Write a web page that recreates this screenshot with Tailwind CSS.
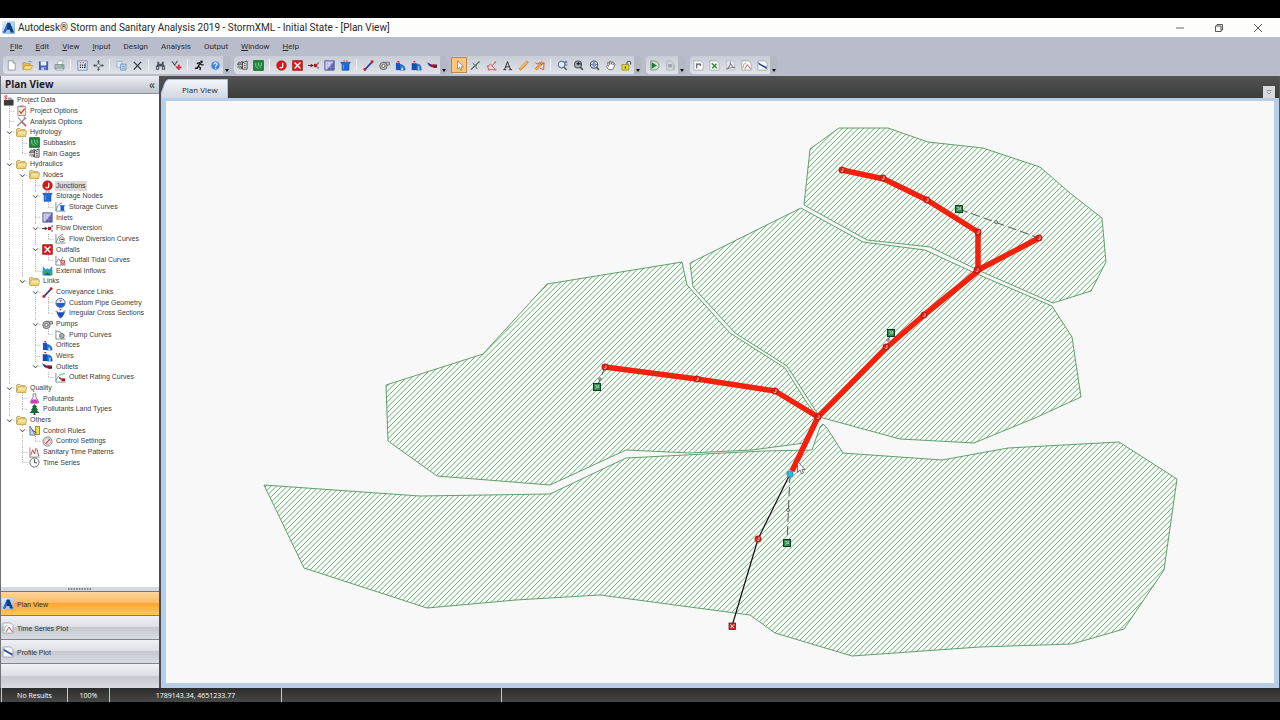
<!DOCTYPE html>
<html lang="en">
<head>
<meta charset="utf-8">
<title>Autodesk Storm and Sanitary Analysis 2019</title>
<script src="https://cdn.jsdelivr.net/npm/@tailwindcss/browser@4"></script>
</head>
<body class="bg-black">

<svg class="absolute size-0" aria-hidden="true">
  <defs>
    <linearGradient id="gBlue" x1="0" y1="0" x2="1" y2="1"><stop offset="0" stop-color="#e8f3fd"/><stop offset="1" stop-color="#7fb0e0"/></linearGradient>
    <linearGradient id="gFold" x1="0" y1="0" x2="0" y2="1"><stop offset="0" stop-color="#fdf4b8"/><stop offset="1" stop-color="#efc958"/></linearGradient>
  </defs>
  <symbol id="i-app" viewBox="0 0 12 12"><rect width="12" height="12" rx="1" fill="url(#gBlue)"/><path d="M1 10.500L5 1.500h2.500L11 10.500H8L7.300 8H4.500L3.200 10.500z" fill="#103a80"/><path d="M1 10.500L5 1.500l-.3 6L3 10.500z" fill="#2f6fc0"/></symbol>
  <symbol id="i-new" viewBox="0 0 12 12"><path d="M2.500 1h5l2.500 2.500V11H2.500z" fill="#fff" stroke="#7d8796" stroke-width=".8"/><path d="M7.500 1v2.500H10" fill="#cdd6e2" stroke="#7d8796" stroke-width=".6"/></symbol>
  <symbol id="i-open" viewBox="0 0 12 12"><path d="M1 10V3h3l1 1h4v2" fill="#e9c04b" stroke="#a87b1d" stroke-width=".6"/><path d="M1 10.500L3 6h8.500L9.500 10.500z" fill="#fbdc74" stroke="#a87b1d" stroke-width=".6"/><path d="M6.500 2.500C8 1 9.500 1 10.500 2.500" fill="none" stroke="#5a86c0" stroke-width=".9"/></symbol>
  <symbol id="i-save" viewBox="0 0 12 12"><path d="M1 1.500h10v9.500H1z" fill="#3f62b8"/><path d="M3 1.500h6v4.500H3z" fill="#e8eefa"/><path d="M3.500 8h5v3h-5z" fill="#b9c6e6"/><path d="M7 8.500h1V11H7z" fill="#27408c"/></symbol>
  <symbol id="i-print" viewBox="0 0 12 12"><path d="M3.500 5L5 1h5L8.500 5z" fill="#fff" stroke="#7c8a90" stroke-width=".6"/><path d="M1 5h10v4.500H1z" fill="#a9b7b8" stroke="#66757a" stroke-width=".6"/><path d="M2 9h8v2H2z" fill="#e4ebe6" stroke="#66757a" stroke-width=".5"/><path d="M8 6.500h2" stroke="#2fa04a"/></symbol>
  <symbol id="i-grid" viewBox="0 0 12 12"><rect x="1" y="1" width="10" height="10" fill="#e9f0f8" stroke="#58779c" stroke-width=".8"/><path d="M3 3h1.500M6 3h1.500" stroke="#c33" stroke-width="1.300"/><path d="M3 5.500h6M3 8h6" stroke="#222" stroke-width="1.400" stroke-dasharray="1.400 .9"/><path d="M9 3v6" stroke="#356db5" stroke-width="1"/></symbol>
  <symbol id="i-move" viewBox="0 0 12 12"><path d="M6 0.500v11M.5 6h11" stroke="#555d6b" stroke-width="1"/><path d="M6 0l1.800 2.500H4.200zM6 12l1.800-2.500H4.200zM0 6l2.500-1.800v3.600zM12 6L9.500 4.200v3.600z" fill="#555d6b"/><circle cx="6" cy="6" r="2" fill="#e6e8ec" stroke="#555d6b" stroke-width=".8"/></symbol>
  <symbol id="i-copy" viewBox="0 0 12 12"><path d="M1 1.500h5.500V8H1z" fill="#dfe9f7" stroke="#87a0c4" stroke-width=".7"/><path d="M5 4.500h6V11H5z" fill="#c3d6f0" stroke="#5e80b4" stroke-width=".7"/><path d="M6.500 7h3M6.500 9h3" stroke="#5e80b4" stroke-width=".7"/></symbol>
  <symbol id="i-del" viewBox="0 0 12 12"><path d="M2 2l8 8.500M10 2L2 10.500" stroke="#30343c" stroke-width="1.300" fill="none"/></symbol>
  <symbol id="i-find" viewBox="0 0 12 12"><path d="M2.500 2h2v2h3V2h2v3l1.500 2v3.500H7.500V7h-3v3.500H1V7l1.500-2z" fill="#4a4f5c"/><path d="M2 7.500h1.500v2H2zM8.500 7.500H10v2H8.500z" fill="#c9ced8"/></symbol>
  <symbol id="i-check" viewBox="0 0 12 12"><path d="M1 1.500l3 4L7 1" fill="none" stroke="#555" stroke-width="1.200"/><path d="M4 5.500L8 10" stroke="#777" stroke-width="1"/><path d="M8.500 5v6M5.500 8h6" stroke="#d5303a" stroke-width="1.900"/></symbol>
  <symbol id="i-run" viewBox="0 0 12 12"><circle cx="8.200" cy="2" r="1.400" fill="#111"/><path d="M3 4l3-1 2 2 2.500.3M6.500 4L4.500 7l2.500 1.500L6.500 11M4.500 7L3.500 9H1" fill="none" stroke="#111" stroke-width="1.400"/></symbol>
  <symbol id="i-help" viewBox="0 0 12 12"><circle cx="6" cy="6" r="5" fill="#3f82d8" stroke="#bcd4f2" stroke-width="1"/><path d="M4.300 4.800c0-2.300 3.500-2.200 3.500-.2C7.800 6 6 5.800 6 7.300" fill="none" stroke="#fff" stroke-width="1.200"/><circle cx="6" cy="9" r=".8" fill="#fff"/></symbol>
  <symbol id="i-rain" viewBox="0 0 12 12"><path d="M.5 5.500C1 2 3 2 4 2.500 5 1 7 1.500 7.500 3L6 5z" fill="#8f9094" stroke="#333" stroke-width=".6"/><path d="M6 3l5-2v9H6z" fill="#e3e3e3" stroke="#222" stroke-width=".8"/><path d="M7.500 4h2M7.500 6h2M7.500 8h2" stroke="#222" stroke-width=".7"/><path d="M1.500 6.500l-.5 2M3.500 6.500l-.5 3M5 7l-.5 3" stroke="#333" stroke-width=".9"/></symbol>
  <symbol id="i-sub" viewBox="0 0 12 12"><rect x=".8" y=".8" width="10.400" height="10.400" fill="#1f8a3f" stroke="#0e4d20" stroke-width=".9"/><path d="M3 3v4l3 2.500M6 3v3l3 2.500M9 3v3.500" stroke="#a4e0b0" stroke-width=".8" fill="none"/></symbol>
  <symbol id="i-junc" viewBox="0 0 12 12"><circle cx="6" cy="6" r="5.300" fill="#e01414" stroke="#9c0c0c" stroke-width=".5"/><path d="M7.300 3v4.200c0 2-2.800 1.900-3 .3" fill="none" stroke="#fff" stroke-width="1.400"/></symbol>
  <symbol id="i-outfall" viewBox="0 0 12 12"><rect x=".8" y=".8" width="10.400" height="10.400" fill="#e01a1a" stroke="#8e1010" stroke-width=".8"/><path d="M2.800 2.800l6.400 6.400M9.200 2.800L2.800 9.200" stroke="#fff" stroke-width="1.500"/></symbol>
  <symbol id="i-flow" viewBox="0 0 12 12"><path d="M0 6h5" stroke="#444" stroke-width="1.200"/><path d="M3 4L6.500 6 3 8z" fill="#6b1a22"/><path d="M6.500 4.200h3.600v3.600H6.500z" fill="#b01d2a"/><path d="M11 2.500v2M11 7.500v2" stroke="#555" stroke-width="1.200"/></symbol>
  <symbol id="i-inlet" viewBox="0 0 12 12"><rect x="1" y="1" width="10" height="10" fill="#d6d6ee" stroke="#36367e" stroke-width=".9"/><path d="M11 1v10H3z" fill="#5a5aae"/><path d="M4 1v10M7.500 1v10M1 4.500h10M1 8h10" stroke="#9b9bce" stroke-width=".5"/></symbol>
  <symbol id="i-stor" viewBox="0 0 12 12"><path d="M.8 2.500H11.200L9.800 5v6.200H2.200V5z" fill="#1d6bd8" stroke="#0c3f8c" stroke-width=".6"/><path d="M4 1h1M7 1h1" stroke="#d22" stroke-width="1.300"/><path d="M3.500 5v5" stroke="#6fa9f2" stroke-width="1"/></symbol>
  <symbol id="i-link" viewBox="0 0 12 12"><path d="M2 10.500L10 2" stroke="#33468f" stroke-width="2"/><circle cx="2" cy="10.300" r="1.600" fill="#c4222a"/><circle cx="10" cy="2" r="1.600" fill="#c4222a"/></symbol>
  <symbol id="i-pump" viewBox="0 0 12 12"><path d="M4.500 2.500H11.500v3H9" fill="#b9b9b9" stroke="#555" stroke-width=".7"/><circle cx="4.800" cy="6.500" r="4" fill="#c2c2c2" stroke="#555" stroke-width=".9"/><circle cx="4.800" cy="6.500" r="1.800" fill="#eee" stroke="#555" stroke-width=".9"/></symbol>
  <symbol id="i-orif" viewBox="0 0 12 12"><path d="M1 3h4.500v8H1z" fill="#1559c4"/><path d="M5.500 5c3 0 5.500 2 5.500 6H5.500z" fill="#2b86e4" stroke="#0d3f8c" stroke-width=".6"/><path d="M7 8.500c1.200-.4 2 .8 2 2.500H7z" fill="#e6f1fc"/><path d="M2 1h3L3.500 3z" fill="#d22"/></symbol>
  <symbol id="i-weir" viewBox="0 0 12 12"><path d="M.8 3.500H6V11H.8z" fill="#0f4fae"/><path d="M6 4.500h2c2 .5 3 2.500 3.200 6.500H6z" fill="#1f74d8" stroke="#0d3f8c" stroke-width=".6"/><path d="M7.500 7h1.800v4H7.500z" fill="#9ccaf6"/><path d="M2 1.200h3L3.500 3z" fill="#d22"/></symbol>
  <symbol id="i-outlet" viewBox="0 0 12 12"><path d="M0 2.500l4.500 2v3L2 6z" fill="#1c3f9e"/><path d="M3.500 4.500L8 5v3.500L4.500 7.500z" fill="#c8141e"/><path d="M7 5h4v3.500H7z" fill="#7c1018"/><path d="M8 5.500h3" stroke="#3a5fc0" stroke-width=".8"/></symbol>
  <symbol id="i-sel" viewBox="0 0 12 12"><path d="M4 .8v9l2-1.800 1.400 3.200 1.400-.6L7.500 7.500h2.800z" fill="#fff" stroke="#7a6a58" stroke-width=".8"/></symbol>
  <symbol id="i-vtx" viewBox="0 0 12 12"><path d="M1 10.500L10.500 1.500" stroke="#4b5160" stroke-width="1.300"/><path d="M3 3l5 7" stroke="#7d8a80" stroke-width="1.200"/><path d="M5 4.500h2.500V7H5z" fill="#5b8a68"/></symbol>
  <symbol id="i-poly" viewBox="0 0 12 12"><path d="M1.500 7L5 4.500l1.500 2L10 2.500M1.500 7L3 10.500h7.500L6.500 6.500" fill="none" stroke="#d84a52" stroke-width=".9"/><path d="M1 6h2v2H1zM9 1.500h2v2H9zM9.500 9.500h2v2h-2zM2 9.500h2v2H2z" fill="#e0686e"/></symbol>
  <symbol id="i-text" viewBox="0 0 12 12"><path d="M1.500 10.500h3M7.500 10.500h3.500M2.800 10.500L6 1.800l3.400 8.700M4 7.500h4.200" fill="none" stroke="#222" stroke-width="1"/></symbol>
  <symbol id="i-rule" viewBox="0 0 12 12"><path d="M1 9.500L9.500 1l1.800 1.700L3 11.300z" fill="#f2a33a" stroke="#bb6f17" stroke-width=".6"/><path d="M2.500 9L9.500 2" stroke="#ffe0a0" stroke-width=".7"/></symbol>
  <symbol id="i-area" viewBox="0 0 12 12"><path d="M1 9.500L8.500 1.500l1.700 1.700L3 11z" fill="#f0a038" stroke="#bb6f17" stroke-width=".5"/><path d="M1.500 3l3 1.500L6 2.500l2 2.500 3-2-.5 7.500-4-1.500" fill="none" stroke="#d2532c" stroke-width="1"/></symbol>
  <symbol id="i-zoomw" viewBox="0 0 12 12"><circle cx="5" cy="5" r="3.600" fill="#dce8f6" stroke="#5d6470" stroke-width="1.100"/><path d="M7.500 7.500l3 3.300" stroke="#5d6470" stroke-width="1.700"/><path d="M9.800.8v3M8.300 2.300h3M8.500 5.500h3" stroke="#3a58a8" stroke-width=".9"/></symbol>
  <symbol id="i-zoomp" viewBox="0 0 12 12"><circle cx="5.500" cy="5" r="3.800" fill="#a8adb5" stroke="#4c525c" stroke-width="1.100"/><path d="M8 7.800l2.800 3" stroke="#4c525c" stroke-width="1.700"/><path d="M3.500 4l3-2v1.300c2 0 3 1 3 2.500-1-1-2-1.200-3-1V6z" fill="#222"/></symbol>
  <symbol id="i-zoome" viewBox="0 0 12 12"><circle cx="5.500" cy="5" r="4" fill="#dce8f6" stroke="#4c525c" stroke-width="1.100"/><path d="M8 7.800l2.800 3" stroke="#4c525c" stroke-width="1.700"/><path d="M5.500 2v6M2.500 5h6" stroke="#2c4f9c" stroke-width="1.100"/><path d="M3.500 3.500h4v3h-4z" fill="#7f97c2"/></symbol>
  <symbol id="i-pan" viewBox="0 0 12 12"><path d="M4 10.500L1.500 7l1-.8L4 7 2.500 3l1.200-.6L5 5V1.500l1.300-.2.5 3.500L8 1.800l1.200.5-.4 3L10 4l1 .6L9.500 8.500 8.500 10.500z" fill="#fff" stroke="#444" stroke-width=".7"/></symbol>
  <symbol id="i-lock" viewBox="0 0 12 12"><path d="M6.500 5V3c0-2.200 4-2.200 4 0v2" fill="none" stroke="#555" stroke-width="1.300"/><path d="M1 5h7.500v6H1z" fill="#e8dc22" stroke="#77701a" stroke-width=".7"/><path d="M4.800 7v2.200" stroke="#333" stroke-width="1.300"/></symbol>
  <symbol id="i-play" viewBox="0 0 12 12"><path d="M2 1h3c8 0 8 10 0 10H2z" fill="#cfe0cf" stroke="#5a6a5a" stroke-width=".7"/><path d="M3 2.500L8.500 6 3 9.500z" fill="#1f7a38"/></symbol>
  <symbol id="i-stop" viewBox="0 0 12 12"><path d="M2 1h4l3 2v8H2z" fill="#d4d7dc" stroke="#a2a6ae" stroke-width=".7"/><path d="M3.500 4.500h4V8h-4z" fill="#9a9fa8"/><path d="M10 5v6" stroke="#a2a6ae"/></symbol>
  <symbol id="i-rep" viewBox="0 0 12 12"><path d="M1 1h7.500L11 3.500V11H1z" fill="#f6f6f8" stroke="#9a9ea6" stroke-width=".7"/><path d="M4 9V4.500h4v2" fill="none" stroke="#555b66" stroke-width="1.200"/></symbol>
  <symbol id="i-xls" viewBox="0 0 12 12"><path d="M1 1h7.500L11 3.500V11H1z" fill="#f6f8f6" stroke="#9a9ea6" stroke-width=".7"/><path d="M3 3.500l5.500 5.500M8 4L3.500 9" stroke="#2d8a3b" stroke-width="1.500"/></symbol>
  <symbol id="i-pdf" viewBox="0 0 12 12"><path d="M2 1h6l2.500 2.500V11H2z" fill="#eeeff2" stroke="#a8abb2" stroke-width=".6"/><path d="M1.500 10C5 8 6.500 4 5.500 2c1 4 3 6 5.500 6.500-3-.5-6.500 0-9.500 1.500z" fill="none" stroke="#7e828c" stroke-width="1.100"/></symbol>
  <symbol id="i-tplot" viewBox="0 0 12 12"><path d="M1 1h7.500L11 3.500V11H1z" fill="#fafafa" stroke="#8e9299" stroke-width=".7"/><path d="M2 9c1-5 2-6 3.500-5" fill="none" stroke="#5aa86a" stroke-width=".8"/><path d="M4 10l3-5 3.500 5" fill="none" stroke="#d0404c" stroke-width=".9"/></symbol>
  <symbol id="i-pplot" viewBox="0 0 12 12"><path d="M1 1h7.500L11 3.500V11H1z" fill="#fafafa" stroke="#8e9299" stroke-width=".7"/><path d="M2 4l8 4.500" stroke="#23469c" stroke-width="1.700"/><path d="M2 2.500v2M10 7v3" stroke="#23469c" stroke-width=".8"/></symbol>
  <symbol id="i-proj" viewBox="0 0 12 12"><path d="M1 5h10.500v6.500H1z" fill="#3a3a3e"/><path d="M4 5V3.500h5V5" fill="none" stroke="#555" stroke-width=".9"/><path d="M.5 0h5v5.500h-5z" fill="#f9dede"/><path d="M4.500 1.200C2 .5 1.200 2.500 3 2.800s1.500 2.200-1.300 1.500" fill="none" stroke="#cf1f2c" stroke-width="1"/></symbol>
  <symbol id="i-popt" viewBox="0 0 12 12"><path d="M2 1.500h8.500v10H2z" fill="#fbeee6" stroke="#9c6b54" stroke-width=".8"/><path d="M4 .5h4v2H4z" fill="#8d8d92"/><path d="M3.500 6.500L5.500 9l4-5" fill="none" stroke="#d5382c" stroke-width="1.300"/></symbol>
  <symbol id="i-aopt" viewBox="0 0 12 12"><path d="M1.500 11L10 2.500" stroke="#8a8f98" stroke-width="1.600"/><path d="M8.500.8L11.200 3.500" stroke="#8a8f98" stroke-width="1.200"/><path d="M2.500 1.500L6 6" stroke="#9aa0a8" stroke-width="1.300"/><path d="M6 6l5 5" stroke="#c45a5a" stroke-width="1.800"/></symbol>
  <symbol id="i-fold" viewBox="0 0 12 12"><path d="M.6 9.500V2.300l.6-.8h3l1 1.200h4.500V5" fill="#f3d67a" stroke="#a08038" stroke-width=".6"/><path d="M2.300 4.300h9.200L10.500 10.500H1.200L.6 9.500z" fill="url(#gFold)" stroke="#a08038" stroke-width=".6"/></symbol>
  <symbol id="i-scurve" viewBox="0 0 12 12"><path d="M1 1v10h10.500" fill="none" stroke="#667" stroke-width=".8"/><path d="M1.500 10C2.500 5 4 3 8 2" fill="none" stroke="#4f7fa8" stroke-width=".9"/><path d="M5 4.500h6L10 6v4.500H6V6z" fill="#1d5fc0"/></symbol>
  <symbol id="i-fcurve" viewBox="0 0 12 12"><path d="M1 1v10h10.500" fill="none" stroke="#667" stroke-width=".8"/><path d="M1.500 10C3 5 4 3 9 1.500" fill="none" stroke="#3d8a66" stroke-width=".9"/><circle cx="7.500" cy="7" r="2.800" fill="#fff" stroke="#555" stroke-width=".7"/><path d="M6 7h3.500" stroke="#b5202a" stroke-width="1.400"/></symbol>
  <symbol id="i-tcurve" viewBox="0 0 12 12"><path d="M1 1v10h10.500" fill="none" stroke="#667" stroke-width=".8"/><path d="M1.500 8l2.500-4 2 3 2.500-5" fill="none" stroke="#6b6fa0" stroke-width=".9"/><rect x="6" y="5.500" width="5" height="5" fill="#c9524c"/><path d="M7 6.500l3 3M10 6.500l-3 3" stroke="#fff" stroke-width=".8"/></symbol>
  <symbol id="i-ext" viewBox="0 0 12 12"><path d="M.8 1v10.200h10.400V1L8 5 6 3.500 4 5z" fill="#2a9ad0"/><path d="M.8 6L4 7l2-1.500L8 7.500l3.200-2v5.700H.8z" fill="#35a86a"/><path d="M2 11.200L6 8l4 3.200z" fill="#1c5fa8"/></symbol>
  <symbol id="i-pipe" viewBox="0 0 12 12"><circle cx="6" cy="6.500" r="5" fill="#e4eefb" stroke="#2a4f94" stroke-width=".9"/><path d="M1.200 6.500h9.600a4.800 4.800 0 01-9.600 0z" fill="#1b5fd0"/><path d="M4.500 3.500h3L6 5.500z" fill="#c8303a"/></symbol>
  <symbol id="i-irr" viewBox="0 0 12 12"><path d="M.5 3.500h2L4 9l2 2 2-2 1.500-5.500h2" fill="none" stroke="#555" stroke-width=".8"/><path d="M1.500 4.500h9.500L8.500 9 6 11.300 4 9z" fill="#1b4fc0"/><path d="M4.500 1h3L6 3z" fill="#c8303a"/></symbol>
  <symbol id="i-pcurve" viewBox="0 0 12 12"><path d="M1 1v10h10.500" fill="none" stroke="#667" stroke-width=".8"/><path d="M1.500 2.500C6 2.500 8 4 9 10" fill="none" stroke="#5879a8" stroke-width=".9"/><circle cx="7.500" cy="7.500" r="2.700" fill="#a6abb4" stroke="#555" stroke-width=".7"/></symbol>
  <symbol id="i-ocurve" viewBox="0 0 12 12"><path d="M1 1v10h10.500" fill="none" stroke="#667" stroke-width=".8"/><path d="M1.500 9C3 4 6 2 11 2" fill="none" stroke="#3d9a5a" stroke-width=".9"/><path d="M4 5l3 1.500v2.500L4.500 7z" fill="#933"/><path d="M7 7h4v3H7z" fill="#b0141e"/></symbol>
  <symbol id="i-poll" viewBox="0 0 12 12"><path d="M4.500.8h3v3.500l3 5.200c.5 1-.2 1.700-1 1.700h-7c-.8 0-1.500-.7-1-1.700l3-5.200z" fill="#f6eaf6" stroke="#6a4a6a" stroke-width=".7"/><path d="M3.200 7h5.600l1.500 3.200-.6.700H2.300l-.6-.7z" fill="#d23cc0"/></symbol>
  <symbol id="i-tree" viewBox="0 0 12 12"><path d="M6 0l3 3.500H7.500L10 6.500H8.500L11.500 9.800H.5L3.500 6.500H2l2.500-3H3z" fill="#146a34"/><path d="M5 9.800h2V12H5z" fill="#5b3a1c"/></symbol>
  <symbol id="i-rules" viewBox="0 0 12 12"><path d="M1 1v10h6z" fill="#c7d3e8" stroke="#44587e" stroke-width=".8"/><path d="M7 1.500h4.500v9H7z" fill="#f0d848" stroke="#5a5020" stroke-width=".7"/><path d="M3 5l5 3.500" stroke="#2d3f88" stroke-width="1"/></symbol>
  <symbol id="i-cset" viewBox="0 0 12 12"><circle cx="6" cy="6" r="5" fill="#f3f1f1" stroke="#6c6c74" stroke-width=".9"/><circle cx="6" cy="6" r="3.300" fill="none" stroke="#c98a8a" stroke-width=".7"/><path d="M4 8.500L8.500 3.500" stroke="#c8303a" stroke-width="1.100"/></symbol>
  <symbol id="i-stp" viewBox="0 0 12 12"><path d="M1 .5V11.500M1 11h10.500" fill="none" stroke="#666" stroke-width=".8"/><path d="M2 9L4 3l2 4.500L7.500 1.500 9 3l1.500 7" fill="none" stroke="#cc3a40" stroke-width="1"/></symbol>
  <symbol id="i-clock" viewBox="0 0 12 12"><circle cx="6" cy="6" r="5" fill="#fafafa" stroke="#55585f" stroke-width=".9"/><path d="M6 2.500V6.300H8.800" fill="none" stroke="#333" stroke-width=".9"/></symbol>
</svg>

<div class="flex h-screen min-h-[500px] flex-col py-[18px] font-['Open_Sans','Noto_Sans',sans-serif] text-[#222]">

  <header class="shrink-0">
    <div class="flex h-[19px] items-center bg-[#fdfdfb] pl-[2px] pr-[17px]">
      <svg class="size-[13px]"><use href="#i-app"/></svg>
      <h1 class="ml-[3px] flex-1 whitespace-nowrap font-['Roboto','Open_Sans',sans-serif] text-[10px] leading-[19px] text-[#2a2a2a]">Autodesk® Storm and Sanitary Analysis 2019 - StormXML - Initial State - [Plan View]</h1>
      <div class="flex items-center gap-[29px] text-[#444]">
        <button aria-label="Minimize" class="block"><svg class="size-[10px]" viewBox="0 0 10 10"><path d="M1 5h8" stroke="currentColor" stroke-width=".8"/></svg></button>
        <button aria-label="Restore" class="block"><svg class="size-[10px]" viewBox="0 0 10 10" fill="none" stroke="currentColor" stroke-width=".9"><path d="M1.500 3h5.500v5.500H1.500zM3 3V1.500h5.500V7H7"/></svg></button>
        <button aria-label="Close" class="block"><svg class="size-[10px]" viewBox="0 0 10 10"><path d="M1 1l8 8M9 1L1 9" stroke="currentColor" stroke-width=".9"/></svg></button>
      </div>
    </div>
    <nav class="flex h-[19px] items-center gap-[13px] bg-[#b9bdcb] pl-[10px] font-['Roboto','Open_Sans',sans-serif] text-[8px] leading-[19px] text-[#2b2b33]" aria-label="Menu">
      <button><u>F</u>ile</button><button><u>E</u>dit</button><button><u>V</u>iew</button><button><u>I</u>nput</button><button>Design</button><button>Analysis</button><button>Output</button><button><u>W</u>indow</button><button><u>H</u>elp</button>
    </nav>
    <div id="toolbar" class="flex h-5 items-start gap-[3px] bg-[#b9bdcb] pl-[3px]" role="toolbar"></div>
  </header>

  <main class="flex min-h-0 flex-1">
    <aside class="flex w-[161px] shrink-0 flex-col border-r-2 border-r-[#4c4e58] border-l border-l-[#70727a] bg-white">
      <div class="flex h-[18px] shrink-0 items-center justify-between border-b border-[#8e929c] bg-linear-to-b from-[#eceef2] to-[#bfc3cd] pl-1 pr-1">
        <h2 class="text-[10px] font-bold leading-[17px] text-[#1e2028]">Plan View</h2>
        <button aria-label="Collapse panel" class="text-[12px] leading-[14px] text-[#333]">«</button>
      </div>
      <div class="min-h-0 flex-1 overflow-hidden pt-px">
        <ul id="tree" role="tree" class="grid h-[373px] auto-rows-fr font-['Liberation_Sans',Arial,sans-serif] text-[7px] text-[#3c3c3c]"></ul>
      </div>
      <div class="flex h-[5px] shrink-0 items-center justify-center border-b border-[#777] bg-[#d5d8df]">
        <svg class="h-[2px] w-6" viewBox="0 0 24 2"><path d="M0 1h24" stroke="#333" stroke-width="1" stroke-dasharray="1.500 1.200"/></svg>
      </div>
      <div class="shrink-0 font-['Liberation_Sans',Arial,sans-serif] text-[7px] text-[#333]">
        <button class="flex h-6 w-full items-center gap-[3px] border-b border-[#8b7a5c] bg-[linear-gradient(#fdd6a0,#fdbb62_48%,#fda531_50%,#fdc95a)] pl-px"><svg class="size-3"><use href="#i-app"/></svg><span class="pt-[3px]">Plan View</span></button>
        <button class="flex h-6 w-full items-center gap-[3px] border-b border-[#7f838c] bg-[linear-gradient(#f0f1f4,#dddfe5_48%,#c5c9d0_50%,#d9dce2)] pl-px"><svg class="size-3"><use href="#i-tplot"/></svg><span class="pt-[3px]">Time Series Plot</span></button>
        <button class="flex h-6 w-full items-center gap-[3px] border-b border-[#7f838c] bg-[linear-gradient(#f0f1f4,#dddfe5_48%,#c5c9d0_50%,#d9dce2)] pl-px"><svg class="size-3"><use href="#i-pplot"/></svg><span class="pt-[3px]">Profile Plot</span></button>
        <div class="h-6 bg-[linear-gradient(#f0f1f4,#dddfe5_48%,#c5c9d0_50%,#d9dce2)]"></div>
      </div>
    </aside>

    <section class="flex min-w-0 flex-1 flex-col border-r border-[#2e5f80]">
      <div class="flex h-[22px] shrink-0 items-end justify-between bg-linear-to-b from-[#525252] to-[#3c3d3d] pr-1">
        <div class="grid h-[19px] w-[67px]">
          <svg class="col-start-1 row-start-1 h-full w-full" viewBox="0 0 67 19" preserveAspectRatio="none"><defs><linearGradient id="gTab" x1="0" y1="0" x2="0" y2="1"><stop offset="0" stop-color="#f4f7fb"/><stop offset=".6" stop-color="#dfe4ec"/><stop offset="1" stop-color="#cfd8e6"/></linearGradient></defs><path d="M0 19V14C3 9 3 1 8 .5H66.500V19" fill="url(#gTab)" stroke="#a9c0e4" stroke-width="1"/></svg>
          <button class="col-start-1 row-start-1 pl-[21px] pt-px text-left text-[8px] leading-[15px] text-[#22242c]">Plan View</button>
        </div>
        <button aria-label="Window list" class="flex size-3 items-center justify-center bg-[#d9dadd]"><svg class="size-2" viewBox="0 0 8 8"><path d="M1.500 2.500h5M2 4l2 2 2-2" fill="none" stroke="#8a8c92" stroke-width=".9"/></svg></button>
      </div>
      <div class="min-h-0 flex-1 bg-[#b8cde8] px-[5px] pb-[5px] pt-[3px]">
        <svg class="block h-full w-full bg-[#f8f8f8]" viewBox="166 101 1108 582" role="img" aria-label="Plan view of the storm network">
          <defs>
            <pattern id="hatch" width="16" height="16" patternUnits="userSpaceOnUse">
              <rect width="16" height="16" fill="#f5fbf5"/>
              <path d="M-1 6.330L6.330-1M-1 11.670L11.670-1M-1 17L17-1M4.330 17L17 4.330M9.670 17L17 9.670" stroke="#5c9566" stroke-width=".8" fill="none"/>
            </pattern>
            <g id="n-junc"><circle r="3.200" fill="#dc1c14" stroke="#8a1a14" stroke-width=".5"/><path d="M1-1.800V.8C1 2-1 2-1 .7" fill="none" stroke="#f4cfc6" stroke-width=".9"/></g>
            <g id="n-sub"><rect x="-3.500" y="-3.500" width="7" height="7" fill="#2f8a4b" stroke="#0e4020" stroke-width="1"/><path d="M-2-1.500h2v2M-2 1.500L1 0M1.500-2v3" stroke="#a8d8b4" stroke-width=".8" fill="none"/></g>
          </defs>
          <g fill="url(#hatch)" stroke="#3f8a4c" stroke-width=".8">
            <path d="M804 205L810 149L839 128H888L928 142L983 148L1040 167L1070 193L1102 218L1106 262L1091 291L1053 303L980 271L930 247L867 240Z"/>
            <path d="M801 208L690 263L693 287L735 333L787 366L817 413L823 418L900 439L974 443L1035 418L1081 397L1072 337L1052 306L977 274L925 250L863 242Z"/>
            <path d="M682 262L547 284L483 354L386 385L388 441L437 476L550 485L626 450L690 453L752 450L804 443L818 417L807 403L785 368L730 333L687 285Z"/>
            <path d="M264 485L420 496L550 494L626 458L763 451L812 450L820 427L823 424L827 428L843 453L942 460L1008 448L1119 442L1177 479L1164 570L1124 629L1072 644L980 647L852 656L775 633L750 615L690 607L600 595L516 600L427 608L304 568Z"/>
          </g>
          <g fill="none" stroke="#333" stroke-width=".8" stroke-dasharray="9 4">
            <path d="M959 209L1039 238M891 332L886 348M597 387L605 367M790 474L787 543"/>
          </g>
          <g fill="#f2f5f2" stroke="#333" stroke-width=".7"><circle cx="996" cy="222" r="1.500"/><circle cx="888" cy="340" r="1.200"/><circle cx="600" cy="379" r="1.200"/><circle cx="788" cy="510" r="1.500"/></g>
          <path d="M790 474L758 539L732 626" fill="none" stroke="#111" stroke-width="1.200"/>
          <g fill="none" stroke="#f3200c" stroke-width="5.500" stroke-linejoin="round">
            <path d="M842 170L884 179L927 200L978 232V271L924 315L886 348L818 417L792 471"/><path d="M1039 238L978 270"/><path d="M605 367L697 379L775 391L818 417"/>
          </g>
          <use href="#n-junc" x="842" y="170"/><use href="#n-junc" x="883" y="178"/><use href="#n-junc" x="927" y="200"/><use href="#n-junc" x="978" y="232"/><use href="#n-junc" x="977" y="270"/><use href="#n-junc" x="1039" y="238"/><use href="#n-junc" x="924" y="315"/><use href="#n-junc" x="886" y="347"/><use href="#n-junc" x="818" y="417"/><use href="#n-junc" x="775" y="391"/><use href="#n-junc" x="697" y="379"/><use href="#n-junc" x="605" y="367"/><use href="#n-junc" x="758" y="539"/>
          <use href="#n-sub" x="959" y="209"/><use href="#n-sub" x="891" y="333"/><use href="#n-sub" x="597" y="387"/><use href="#n-sub" x="787" y="543"/>
          <circle cx="790" cy="474" r="3.300" fill="#35b4d6" stroke="#1c7f9c" stroke-width=".6"/>
          <rect x="729" y="623" width="6.500" height="6.500" fill="#d42a26" stroke="#701614" stroke-width=".8"/><path d="M730.500 624.500l3.500 3.500M734 624.500l-3.500 3.500" stroke="#fff" stroke-width="1"/>
          <path d="M797.500 461.500v11l2.500-2.300 1.700 3.600 1.700-.8-1.600-3.500h3.400z" fill="#fff" stroke="#555" stroke-width=".8"/>
        </svg>
      </div>
    </section>
  </main>

  <footer class="flex h-[14px] shrink-0 bg-linear-to-b from-[#2b2d2e] via-[#3a3937] to-[#454748] pl-px text-center text-[7px] leading-[16px] text-white">
    <span class="w-[66px] border-l border-[#c8c8c8]">No Results</span>
    <span class="w-[42px] border-l border-[#c8c8c8]">100%</span>
    <span class="w-[172px] border-l border-[#c8c8c8]">1789143.34, 4651233.77</span>
    <span class="w-[220px] border-l border-[#c8c8c8]"></span>
    <span class="flex-1 border-l border-[#c8c8c8]"></span>
  </footer>
</div>

<script>
  // Toolbars: "|" is a separator, "*" marks the active tool
  const bars = [
    'new open save print | grid move | copy del | find check | run help',
    'rain sub | junc outfall flow inlet stor | link pump orif weir outlet',
    '*sel vtx poly text rule area | zoomw zoomp zoome pan lock',
    'play stop',
    'rep xls pdf tplot pplot'
  ];
  const icon = (n, cls) => `<svg class="${cls}" aria-hidden="true"><use href="#i-${n}"/></svg>`;
  document.getElementById('toolbar').innerHTML = bars.map((b, i) =>
    `<div class="${i > 2 ? 'ml-px flex h-[18px] items-center rounded-sm bg-linear-to-b from-[#c9cdd7] to-[#dfe2e8]' : 'flex h-[18px] items-center rounded-sm bg-linear-to-b from-[#c9cdd7] to-[#dfe2e8]'}">` +
    b.split(' ').map(t => {
      if (t === '|') return '<span class="mx-[3px] h-3 w-px bg-[#eef0f4]"></span>';
      const on = t[0] === '*', n = on ? t.slice(1) : t;
      return `<button aria-label="${n}" class="${on ? 'flex h-4 w-4 items-center justify-center border border-[#b98748] bg-[#fdc67c]' : 'flex h-4 w-4 items-center justify-center'}">${icon(n, 'size-[11px]')}</button>`;
    }).join('') +
    '<button aria-label="Toolbar options" class="flex h-[18px] w-2 items-end justify-center rounded-r-sm bg-[#b4b8c4] pb-[2px]"><svg class="h-[3px] w-1" viewBox="0 0 4 3"><path d="M0 0h4L2 3z" fill="#111"/></svg></button></div>'
  ).join('');

  // Tree rows: [depth, icon, label, expanded]
  const rows = [
    [0,'proj','Project Data'],[1,'popt','Project Options'],[1,'aopt','Analysis Options'],
    [1,'fold','Hydrology',1],[2,'sub','Subbasins'],[2,'rain','Rain Gages'],
    [1,'fold','Hydraulics',1],[2,'fold','Nodes',1],[3,'junc','Junctions'],[3,'stor','Storage Nodes',1],[4,'scurve','Storage Curves'],
    [3,'inlet','Inlets'],[3,'flow','Flow Diversion',1],[4,'fcurve','Flow Diversion Curves'],[3,'outfall','Outfalls',1],[4,'tcurve','Outfall Tidal Curves'],[3,'ext','External Inflows'],
    [2,'fold','Links',1],[3,'link','Conveyance Links',1],[4,'pipe','Custom Pipe Geometry'],[4,'irr','Irregular Cross Sections'],
    [3,'pump','Pumps',1],[4,'pcurve','Pump Curves'],[3,'orif','Orifices'],[3,'weir','Weirs'],[3,'outlet','Outlets',1],[4,'ocurve','Outlet Rating Curves'],
    [1,'fold','Quality',1],[2,'poll','Pollutants'],[2,'tree','Pollutants Land Types'],
    [1,'fold','Others',1],[2,'rules','Control Rules',1],[3,'cset','Control Settings'],[2,'stp','Sanitary Time Patterns'],[2,'clock','Time Series']
  ];
  const continues = (i, d) => {
    for (let k = i + 1; k < rows.length; k++) {
      if (rows[k][0] === d) return true;
      if (rows[k][0] < d) return false;
    }
    return false;
  };
  document.getElementById('tree').innerHTML = rows.map(([d, ic, label, open], i) => {
    let cells = '';
    for (let c = 1; c <= d; c++) {
      const more = continues(i, c);
      let p = '';
      if (c < d) p = more ? 'M6.500 0v11' : '';
      else p = (more ? 'M6.500 0v11' : 'M6.500 0v5.500') + 'M6.500 5.500h6';
      const chev = c === d && open ? '<rect x="3" y="2" width="7" height="7" fill="#fff"/><path d="M4 4.500L6.500 7 9 4.500" fill="none" stroke="#333" stroke-width="1"/>' : '';
      cells += `<svg class="h-full w-[13px] shrink-0" viewBox="0 0 13 11" aria-hidden="true"><path d="${p}" fill="none" stroke="#999" stroke-width=".8" stroke-dasharray="1 1"/>${chev}</svg>`;
    }
    const sel = label === 'Junctions';
    return `<li role="treeitem" class="flex min-h-0 items-center whitespace-nowrap pl-[2px]">${cells}${icon(ic, 'size-[11px] shrink-0')}<span class="${sel ? 'ml-[2px] bg-[#d9d9d9] px-px leading-[10px]' : 'ml-[2px] px-px leading-[10px]'}">${label}</span></li>`;
  }).join('');
</script>
</body>
</html>
